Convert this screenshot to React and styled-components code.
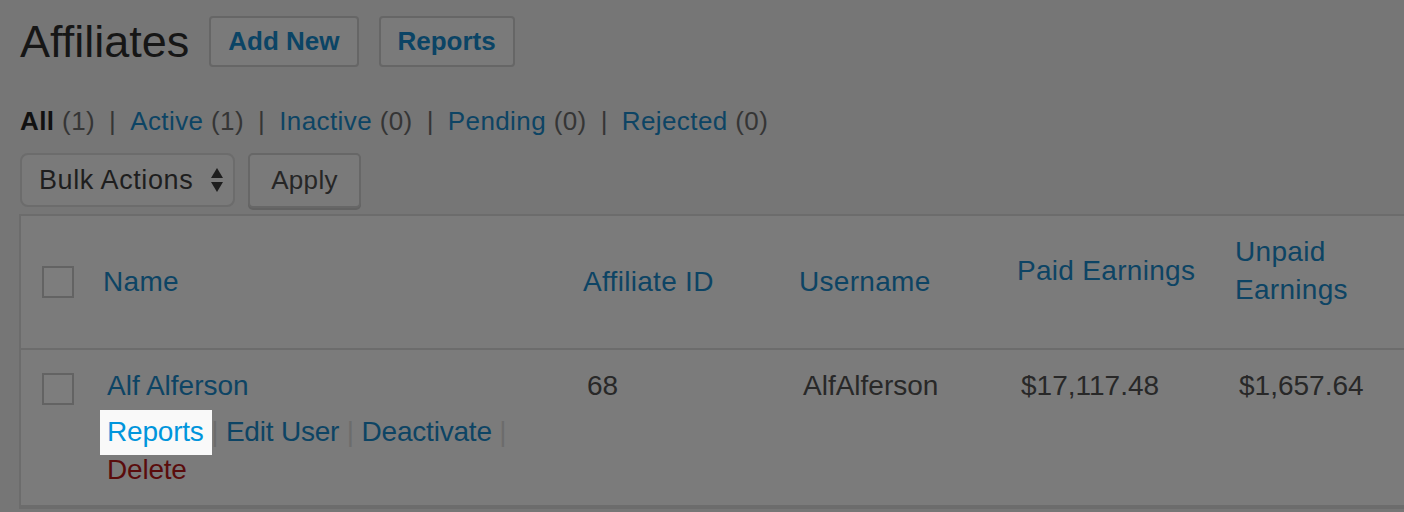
import React from 'react';
import styled, { createGlobalStyle } from 'styled-components';

const GlobalStyle = createGlobalStyle`
  html, body {
    margin: 0;
    padding: 0;
    background: #767676;
    font-family: 'Liberation Sans', Arial, sans-serif;
    overflow: hidden;
  }
`;

const Wrap = styled.div`
  padding: 16px 0 0 19px;
  height: 512px;
  box-sizing: border-box;
  overflow: hidden;
`;

const Header = styled.div`
  display: flex;
  align-items: center;
  height: 51px;
`;

const Title = styled.h1`
  margin: 0 20px 0 1px;
  font-size: 45px;
  font-weight: 400;
  color: #161616;
  line-height: 51px;
`;

const PageButton = styled.a`
  display: flex;
  align-items: center;
  box-sizing: border-box;
  height: 51px;
  padding: 0 17px;
  margin-right: 20px;
  border: 2px solid #666;
  border-radius: 4px;
  background: #7a7a7a;
  color: #0b4465;
  font-size: 26px;
  font-weight: 700;
`;

const Filters = styled.ul`
  display: flex;
  margin: 36px 0 0 1px;
  padding: 0;
  list-style: none;
  font-size: 26px;
  line-height: 36px;
  letter-spacing: 0.4px;
`;

const FilterItem = styled.li`
  color: ${p => (p.current ? '#111' : '#0d4464')};
  font-weight: ${p => (p.current ? 700 : 400)};
`;

const Count = styled.span`
  color: #353535;
  font-weight: 400;
`;

const Divider = styled.li`
  padding: 0 14px;
  color: #353535;
`;

const ActionsBar = styled.div`
  display: flex;
  gap: 13px;
  margin: 14px 0 0 1px;
`;

const Select = styled.div`
  display: flex;
  align-items: center;
  justify-content: space-between;
  box-sizing: border-box;
  width: 215px;
  height: 54px;
  padding: 0 9px 0 17px;
  border: 2px solid #6c6c6c;
  border-radius: 8px;
  background: #7a7a7a;
  color: #1e1e1e;
  font-size: 27px;
  letter-spacing: 0.6px;
`;

const ApplyButton = styled.button`
  box-sizing: border-box;
  width: 113px;
  height: 55px;
  border: 2px solid #676767;
  border-radius: 5px;
  background: #7a7a7a;
  box-shadow: 0 2px 0 #626262;
  color: #262626;
  font-family: inherit;
  font-size: 26px;
  letter-spacing: 0.3px;
  padding: 0;
`;

const Table = styled.div`
  margin-top: 6px;
  width: 1500px;
  border: 2px solid #6c6c6c;
  background: #7b7b7b;
`;

const Row = styled.div`
  display: grid;
  grid-template-columns: 78px 480px 216px 218px 218px 200px 1fr;
  border-bottom: 2px solid #6c6c6c;
  height: ${p => p.h}px;
  box-sizing: border-box;
`;

const HeadCell = styled.div`
  display: flex;
  align-items: center;
  padding: 0 10px ${p => (p.lift ? 22 : 0)}px 4px;
  color: #0d4464;
  font-size: 28px;
  line-height: 38px;
  letter-spacing: 0.3px;
`;

const CheckCell = styled.div`
  display: flex;
  align-items: ${p => (p.top ? 'flex-start' : 'center')};
  padding: ${p => (p.top ? '23px' : '0')} 0 0 21px;
`;

const Checkbox = styled.span`
  display: block;
  box-sizing: border-box;
  width: 32px;
  height: 32px;
  border: 2px solid #636363;
  background: #7d7d7d;
`;

const Cell = styled.div`
  padding: 17px 10px 17px 8px;
  color: #282828;
  font-size: 28px;
  line-height: 38px;
`;

const NameLink = styled.div`
  color: #0d4464;
`;

const RowActions = styled.div`
  margin-top: 8px;
  letter-spacing: -0.2px;
`;

const Action = styled.span`
  display: inline-block;
  white-space: pre;
`;

const ActionLink = styled.a`
  color: ${p => (p.danger ? '#5a0c0c' : '#0d4464')};
`;

const Spotlight = styled.a`
  position: relative;
  display: inline-block;
  margin: -3px -8px -4px -7px;
  padding: 3px 8px 4px 7px;
  background: #f9f9f9;
  color: #0095dc;
`;

const Sep = styled.span`
  color: #6c6c6c;
`;

const Arrows = () => (
  <svg width="14" height="26" viewBox="0 0 14 26">
    <path d="M7 1 L13 11 L1 11 Z" fill="#1e1e1e" />
    <path d="M7 25 L13 15 L1 15 Z" fill="#1e1e1e" />
  </svg>
);

const filters = [
  { label: 'All', count: 1, current: true },
  { label: 'Active', count: 1 },
  { label: 'Inactive', count: 0 },
  { label: 'Pending', count: 0 },
  { label: 'Rejected', count: 0 },
];

export default function App() {
  return (
    <Wrap>
      <GlobalStyle />
      <Header>
        <Title>Affiliates</Title>
        <PageButton>Add New</PageButton>
        <PageButton>Reports</PageButton>
      </Header>

      <Filters>
        {filters.map((f, i) => (
          <React.Fragment key={f.label}>
            {i > 0 && <Divider>|</Divider>}
            <FilterItem current={f.current}>
              {f.label} <Count>({f.count})</Count>
            </FilterItem>
          </React.Fragment>
        ))}
      </Filters>

      <ActionsBar>
        <Select>
          Bulk Actions
          <Arrows />
        </Select>
        <ApplyButton>Apply</ApplyButton>
      </ActionsBar>

      <Table>
        <Row h={134}>
          <CheckCell>
            <Checkbox />
          </CheckCell>
          <HeadCell>Name</HeadCell>
          <HeadCell>Affiliate ID</HeadCell>
          <HeadCell>Username</HeadCell>
          <HeadCell lift>Paid Earnings</HeadCell>
          <HeadCell lift>Unpaid Earnings</HeadCell>
          <HeadCell />
        </Row>
        <Row h={157}>
          <CheckCell top>
            <Checkbox />
          </CheckCell>
          <Cell>
            <NameLink>Alf Alferson</NameLink>
            <RowActions>
              <Action>
                <Spotlight>Reports</Spotlight>
                <Sep> | </Sep>
              </Action>
              <Action>
                <ActionLink>Edit User</ActionLink>
                <Sep> | </Sep>
              </Action>
              <Action>
                <ActionLink>Deactivate</ActionLink>
                <Sep> | </Sep>
              </Action>
              <Action>
                <ActionLink danger>Delete</ActionLink>
              </Action>
            </RowActions>
          </Cell>
          <Cell>68</Cell>
          <Cell>AlfAlferson</Cell>
          <Cell>$17,117.48</Cell>
          <Cell>$1,657.64</Cell>
          <Cell />
        </Row>
      </Table>
    </Wrap>
  );
}
